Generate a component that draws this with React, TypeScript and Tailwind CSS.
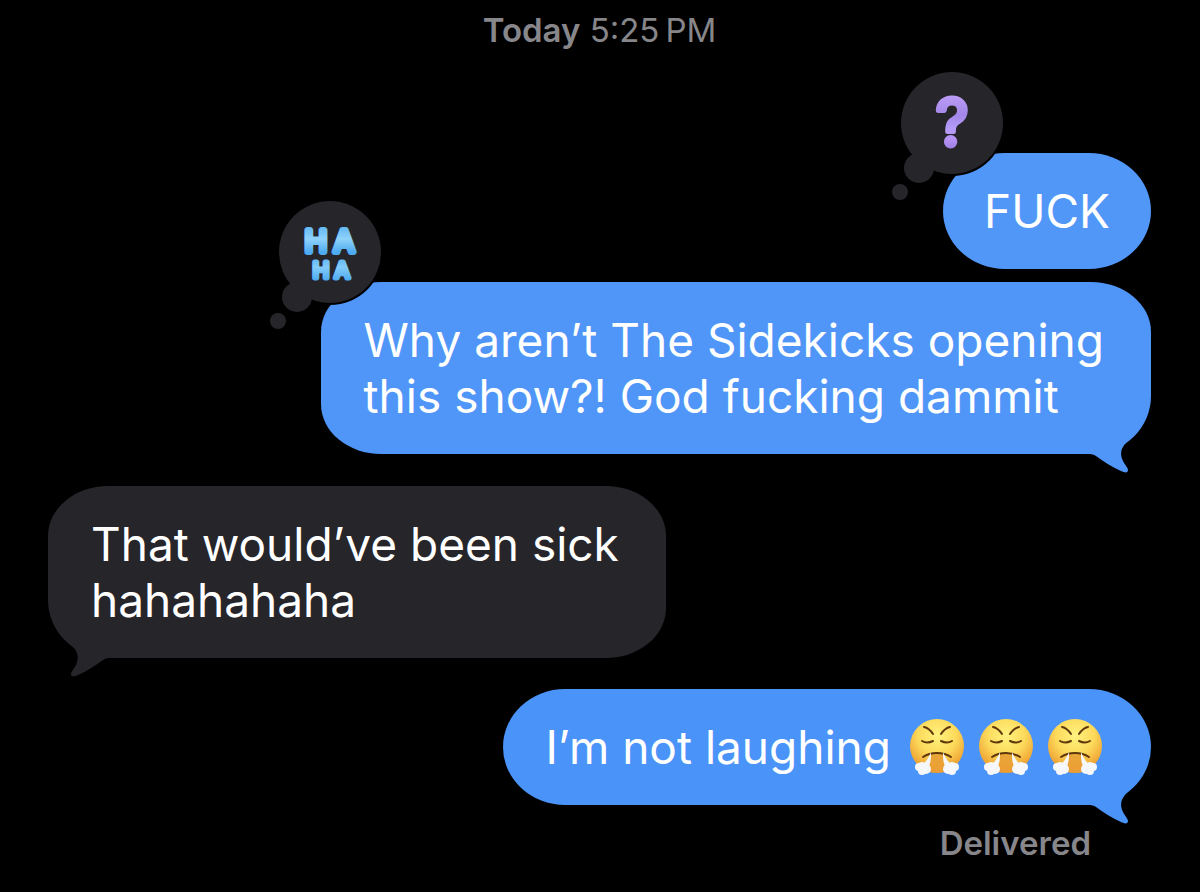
import React from 'react';

type Side = 'sent' | 'received';

const TAIL =
  'M6 36 L40 26 L52 34 C43 42 37 48 42 59 C44 63 47 66 47 68 C47 71 44 71 40 69 C31 65 22 59 15 54 C12 52 9 52 4 51 Z';

const Tail: React.FC<{ side: Side; fill: string }> = ({ side, fill }) => (
  <svg
    viewBox="0 0 70 72"
    className={
      side === 'sent'
        ? 'absolute right-0 -bottom-5 w-[70px] h-[72px]'
        : 'absolute left-0 -bottom-5 w-[70px] h-[72px] -scale-x-100'
    }
    aria-hidden="true"
  >
    <path d={TAIL} fill={fill} />
  </svg>
);

// Thought bubble that hangs off the top left corner of a message
const Tapback: React.FC<{ label: string; children: React.ReactNode }> = ({ label, children }) => (
  <svg
    viewBox="0 0 116 136"
    className="absolute -left-[53px] -top-[83px] w-[116px] h-[136px]"
    role="img"
    aria-label={label}
  >
    <circle cx="62" cy="53" r="53" fill="#000" />
    <circle cx="62" cy="53" r="51" fill="#26252a" />
    <circle cx="29" cy="98" r="15" fill="#26252a" />
    <circle cx="10" cy="122" r="8" fill="#26252a" />
    {children}
  </svg>
);

const QuestionTapback = () => (
  <Tapback label="Questioned">
    <defs>
      <linearGradient id="violet" gradientUnits="userSpaceOnUse" x1="0" y1="26" x2="0" y2="80">
        <stop offset="0" stopColor="#bb9cf6" />
        <stop offset="0.35" stopColor="#a386e8" />
        <stop offset="0.6" stopColor="#b59cf9" />
        <stop offset="0.8" stopColor="#b692f4" />
        <stop offset="1" stopColor="#9b7ce0" />
      </linearGradient>
    </defs>
    <text
      x="62"
      y="76"
      textAnchor="middle"
      fontSize="64"
      fontWeight="400"
      fill="url(#violet)"
      stroke="url(#violet)"
      strokeWidth="5"
      strokeLinejoin="round"
    >
      ?
    </text>
  </Tapback>
);

const HahaTapback = () => (
  <Tapback label="Laughed">
    <defs>
      <linearGradient id="sky" gradientUnits="userSpaceOnUse" x1="0" y1="26" x2="0" y2="82">
        <stop offset="0" stopColor="#5cb4f2" />
        <stop offset="0.25" stopColor="#8fd2fb" />
        <stop offset="0.5" stopColor="#4aa9f0" />
        <stop offset="0.75" stopColor="#84cbf9" />
        <stop offset="1" stopColor="#4aa9f0" />
      </linearGradient>
    </defs>
    <text
      textAnchor="middle"
      fontWeight="400"
      fill="url(#sky)"
      stroke="url(#sky)"
      strokeLinejoin="round"
    >
      <tspan x="48 76" y="53" fontSize="30" strokeWidth="6">HA</tspan>
      <tspan x="53 74" y="79" fontSize="22" strokeWidth="5">HA</tspan>
    </text>
  </Tapback>
);

const HuffEmoji = () => (
  <svg viewBox="0 0 56 58" className="w-14 h-[58px] shrink-0" role="img" aria-label="Face with steam from nose">
    <defs>
      <radialGradient id="face" cx="0.5" cy="0.3" r="0.72">
        <stop offset="0" stopColor="#fff27e" />
        <stop offset="0.5" stopColor="#fcd95a" />
        <stop offset="0.8" stopColor="#f2ae3b" />
        <stop offset="1" stopColor="#e0902c" />
      </radialGradient>
      <linearGradient id="mouth" x1="0" y1="0" x2="0" y2="1">
        <stop offset="0" stopColor="#d98420" />
        <stop offset="1" stopColor="#f0a23a" />
      </linearGradient>
    </defs>
    <circle cx="28" cy="28" r="27" fill="url(#face)" />
    <path d="M22 36 H34 L36 54 Q28 56 20 54 Z" fill="url(#mouth)" opacity="0.6" />
    <g fill="none" stroke="#5f370b" strokeWidth="2" strokeLinecap="round">
      <path d="M15 9 Q20 10 24 16" />
      <path d="M41 9 Q36 10 32 16" />
      <path d="M13 23 Q18 26 24 23" />
      <path d="M32 23 Q38 26 43 23" />
      <path d="M14 39 Q20 35 28 35 Q36 35 42 39" />
    </g>
    <g fill="#f6f7fb">
      <path d="M22 34 C20 39 18 43 13 47 L19 50 C22 45 22 40 22 34 Z" />
      <path d="M34 34 C36 39 38 43 43 47 L37 50 C34 45 34 40 34 34 Z" />
      <circle cx="10" cy="49" r="4" />
      <circle cx="13" cy="48" r="4" />
      <circle cx="13" cy="53" r="4" />
      <circle cx="17" cy="51" r="5" />
      <circle cx="46" cy="49" r="4" />
      <circle cx="43" cy="48" r="4" />
      <circle cx="43" cy="53" r="4" />
      <circle cx="39" cy="51" r="5" />
    </g>
  </svg>
);

const App: React.FC = () => {
  return (
    <main className="min-h-screen w-full overflow-hidden bg-black pt-3 pr-[49px] pl-12 font-['Inter','Liberation_Sans',sans-serif] text-white">
      <p className="text-center text-[33px] leading-9 text-[#87868b]">
        <span className="font-semibold">Today</span> 5:25{'\u202f'}PM
      </p>

      <ol className="mt-[105px] flex flex-col text-[46px] leading-14">
        <li className="relative self-end rounded-[62px/58px] bg-[#5197f8] px-[41px] py-[30px]">
          FUCK
          <QuestionTapback />
        </li>

        <li className="relative mt-[13px] self-end rounded-[60px/50px] rounded-br-[60px_58px] bg-[#4f96f8] py-[30px] pr-[47px] pl-[43px]">
          Why aren’t The Sidekicks opening
          <br />
          this show?! God fucking dammit
          <HahaTapback />
          <Tail side="sent" fill="#4f96f8" />
        </li>

        <li className="relative mt-8 self-start rounded-[60px/50px] rounded-bl-[60px_58px] bg-[#26252a] py-[30px] pr-[47px] pl-[43px]">
          That would’ve been sick
          <br />
          hahahahaha
          <Tail side="received" fill="#26252a" />
        </li>

        <li className="relative mt-[31px] flex items-center gap-[18px] self-end rounded-[62px/58px] bg-[#4a93f8] py-[30px] pr-12 pl-[43px]">
          I’m not laughing
          <span className="flex h-14 items-center gap-[13px]">
            <HuffEmoji />
            <HuffEmoji />
            <HuffEmoji />
          </span>
          <Tail side="sent" fill="#4a93f8" />
        </li>
      </ol>

      <p className="mt-5 pr-15 text-right text-[33px] leading-9 font-semibold text-[#87868b]">Delivered</p>
    </main>
  );
};

export default App;
